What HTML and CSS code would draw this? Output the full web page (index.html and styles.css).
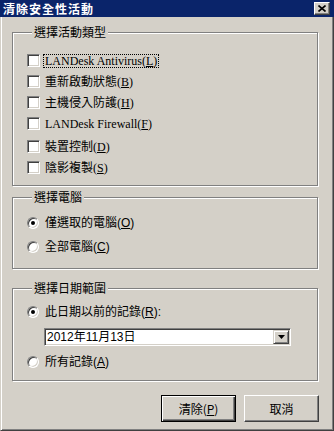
FILE: index.html
```html
<!DOCTYPE html>
<html>
<head>
    <title>清除安全性活動</title>
    <link rel="stylesheet" href="styles.css">
</head>
<body>
    <div class="titlebar">
        <span class="title">清除安全性活動</span>
        <span class="close-btn">
            <svg width="8" height="7" viewBox="0 0 8 7"><path d="M0.5 0.5 L7.5 6.5 M7.5 0.5 L0.5 6.5" stroke="#000" stroke-width="1.6"/></svg>
        </span>
    </div>
    <div class="client">
        <fieldset class="group group-types">
            <legend>選擇活動類型</legend>
            <div class="check-row"><span class="checkbox"></span><span class="label serif focus">LANDesk Antivirus(<u>L</u>)</span></div>
            <div class="check-row"><span class="checkbox"></span><span class="label serif">重新啟動狀態(<u>B</u>)</span></div>
            <div class="check-row"><span class="checkbox"></span><span class="label serif">主機侵入防護(<u>H</u>)</span></div>
            <div class="check-row"><span class="checkbox"></span><span class="label serif">LANDesk Firewall(<u>F</u>)</span></div>
            <div class="check-row"><span class="checkbox"></span><span class="label serif">裝置控制(<u>D</u>)</span></div>
            <div class="check-row"><span class="checkbox"></span><span class="label serif">陰影複製(<u>S</u>)</span></div>
        </fieldset>

        <fieldset class="group group-computers">
            <legend>選擇電腦</legend>
            <div class="radio-row"><span class="radio checked"></span><span class="label">僅選取的電腦(<u>O</u>)</span></div>
            <div class="radio-row"><span class="radio"></span><span class="label">全部電腦(<u>C</u>)</span></div>
        </fieldset>

        <fieldset class="group group-dates">
            <legend>選擇日期範圍</legend>
            <div class="radio-row"><span class="radio checked"></span><span class="label">此日期以前的記錄(<u>R</u>):</span></div>
            <div class="combo">
                <span class="combo-text">2012年11月13日</span>
                <span class="combo-btn">
                    <svg width="7" height="4" viewBox="0 0 7 4"><path d="M0 0 H7 L3.5 4 Z" fill="#000"/></svg>
                </span>
            </div>
            <div class="radio-row"><span class="radio"></span><span class="label">所有記錄(<u>A</u>)</span></div>
        </fieldset>

        <div class="buttons">
            <button type="button" class="btn btn-default">清除(<u>P</u>)</button>
            <button type="button" class="btn">取消</button>
        </div>
    </div>
</body>
</html>
```

FILE: styles.css
```css
body {
    margin: 0;
    width: 334px;
    height: 431px;
    background-color: #d4d0c8;
    font-family: "Liberation Sans", "Noto Sans CJK TC", sans-serif;
    font-size: 12px;
    color: #000;
    overflow: hidden;
}

.titlebar {
    height: 17px;
    background: #0a246a;
    display: flex;
    align-items: center;
    justify-content: space-between;
    padding-left: 3px;
}
.title {
    color: #fff;
    font-weight: bold;
    font-family: "Noto Sans CJK TC", sans-serif;
    font-size: 12px;
    line-height: 14px;
    letter-spacing: 1px;
}
.close-btn {
    width: 16px;
    height: 13px;
    box-sizing: border-box;
    margin-right: 4px;
    background: #d4d0c8;
    border: 1px solid;
    border-color: #fff #404040 #404040 #fff;
    box-shadow: inset -1px -1px 0 #808080;
    display: flex;
    align-items: center;
    justify-content: center;
}

.client {
    height: 414px;
    box-sizing: border-box;
    border-left: 1px solid #d4d0c8;
    border-right: 1px solid #404040;
    border-bottom: 1px solid #404040;
    box-shadow: inset 1px 0 0 #fff, inset -1px -1px 0 #808080;
    padding-top: 8px;
}

.group {
    margin: 0 0 0 11px;
    width: 306px;
    box-sizing: border-box;
    min-inline-size: 0;
    border: 1px solid #808080;
    box-shadow: 1px 1px 0 #fff, inset 1px 1px 0 #fff;
    padding: 0 0 0 14px;
}
.group legend {
    margin-left: 5px;
    padding: 0 2px;
    line-height: 14px;
    background: #d4d0c8;
    font-family: "Noto Sans CJK TC", sans-serif;
}
.group-types {
    padding-top: 11px;
    padding-bottom: 7px;
}
.group-computers {
    margin-top: 4px;
    padding-top: 7px;
    padding-bottom: 9px;
}
.group-dates {
    margin-top: 12px;
    padding-top: 5px;
    padding-bottom: 6px;
}

.check-row, .radio-row {
    display: flex;
    align-items: center;
}
.check-row {
    height: 21px;
}
.check-row:nth-child(6) {
    margin-top: 2px;
}
.radio-row {
    height: 24px;
}

.label {
    line-height: 12px;
    padding: 0 1px;
    border: 1px dotted transparent;
    margin-left: 3px;
    white-space: nowrap;
}
.label.serif {
    font-family: "Liberation Serif", "Noto Sans CJK TC", serif;
}
.label.focus {
    border-color: #000;
}
.radio-row .label {
    margin-left: 4px;
}

.checkbox {
    width: 13px;
    height: 13px;
    box-sizing: border-box;
    background: #fff;
    border: 1px solid;
    border-color: #808080 #fff #fff #808080;
    box-shadow: inset 1px 1px 0 #404040, inset -1px -1px 0 #d4d0c8;
    flex-shrink: 0;
}

.radio {
    width: 12px;
    height: 12px;
    box-sizing: border-box;
    border-radius: 50%;
    background: #fff;
    border: 1px solid;
    border-color: #808080 #fff #fff #808080;
    box-shadow: inset 1px 1px 0 #404040, inset -1px -1px 0 #d4d0c8;
    flex-shrink: 0;
    display: flex;
    align-items: center;
    justify-content: center;
}
.radio.checked::after {
    content: "";
    width: 4px;
    height: 4px;
    border-radius: 50%;
    background: #000;
}

.combo {
    margin: 4px 0 4px 17px;
    width: 247px;
    height: 18px;
    box-sizing: border-box;
    background: #fff;
    border: 1px solid;
    border-color: #808080 #fff #fff #808080;
    box-shadow: inset 1px 1px 0 #404040, inset -1px -1px 0 #d4d0c8;
    display: flex;
    align-items: center;
    justify-content: space-between;
    padding: 1px;
}
.combo-text {
    padding-left: 1px;
    font-family: "Liberation Sans", "Noto Sans CJK TC", sans-serif;
    font-size: 12px;
    line-height: 14px;
}
.combo-btn {
    width: 16px;
    height: 14px;
    box-sizing: border-box;
    background: #d4d0c8;
    border: 1px solid;
    border-color: #d4d0c8 #404040 #404040 #d4d0c8;
    box-shadow: inset 1px 1px 0 #fff, inset -1px -1px 0 #808080;
    display: flex;
    align-items: center;
    justify-content: center;
}

.buttons {
    margin: 14px 0 0 11px;
    width: 307px;
    display: flex;
    justify-content: flex-end;
    gap: 8px;
}
.btn {
    width: 75px;
    height: 27px;
    box-sizing: border-box;
    margin: 0;
    padding: 0;
    background: #d4d0c8;
    font-family: "Noto Sans CJK TC", sans-serif;
    font-size: 12px;
    line-height: 14px;
    color: #000;
    border: 1px solid;
    border-color: #fff #404040 #404040 #fff;
    box-shadow: inset -1px -1px 0 #808080;
}
.btn-default {
    border: 1px solid #000;
    box-shadow: inset 1px 1px 0 #fff, inset -1px -1px 0 #404040, inset -2px -2px 0 #808080;
}
```
